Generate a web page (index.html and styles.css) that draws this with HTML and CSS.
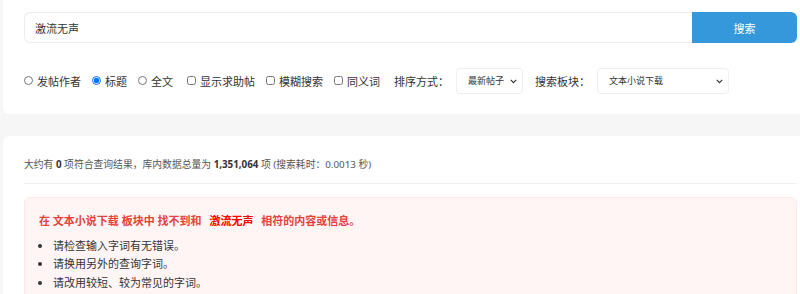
FILE: index.html
```html
<!DOCTYPE html>
<html lang="zh-CN">
<head>
<meta charset="utf-8">
<title>搜索</title>
<link rel="stylesheet" href="styles.css">
</head>
<body>
<div class="wrap">
  <section class="card search-card">
    <form class="search-bar">
      <input class="search-input" type="text" value="激流无声">
      <button class="search-btn" type="button">搜索</button>
    </form>
    <div class="options">
      <label class="opt"><input type="radio" name="scope">发帖作者</label>
      <label class="opt"><input type="radio" name="scope" checked>标题</label>
      <label class="opt opt-wide"><input type="radio" name="scope">全文</label>
      <label class="opt"><input type="checkbox">显示求助帖</label>
      <label class="opt"><input type="checkbox">模糊搜索</label>
      <label class="opt opt-wide"><input type="checkbox">同义词</label>
      <span class="sel-label">排序方式：</span>
      <div class="sel sel-sort">
        <select><option>最新帖子</option></select>
        <svg class="chev" width="7" height="5" viewBox="0 0 7 5"><path d="M0.8 0.9 L3.5 3.6 L6.2 0.9" fill="none" stroke="#333" stroke-width="1.2"/></svg>
      </div>
      <span class="sel-label">搜索板块：</span>
      <div class="sel sel-board">
        <select><option>文本小说下载</option></select>
        <svg class="chev" width="7" height="5" viewBox="0 0 7 5"><path d="M0.8 0.9 L3.5 3.6 L6.2 0.9" fill="none" stroke="#333" stroke-width="1.2"/></svg>
      </div>
    </div>
  </section>

  <section class="card result-card">
    <p class="stats">大约有 <b>0</b> 项符合查询结果，库内数据总量为 <b>1,351,064</b> 项 (搜索耗时：0.0013 秒)</p>
    <div class="alert">
      <p class="alert-title">在 文本小说下载 板块中 找不到和 <span class="kw">激流无声</span> 相符的内容或信息。</p>
      <ul class="tips">
        <li>请检查输入字词有无错误。</li>
        <li>请换用另外的查询字词。</li>
        <li>请改用较短、较为常见的字词。</li>
      </ul>
    </div>
  </section>
</div>
</body>
</html>
```

FILE: styles.css
```css
html, body {
  margin: 0;
  padding: 0;
}
body {
  background: #f6f6f6;
  overflow: hidden;
  font-family: "Noto Sans", "Noto Sans CJK SC", sans-serif;
  color: #333;
  font-size: 11px;
}
.wrap {
  width: 815px;
  margin-left: 3px;
}
.card {
  background: #fff;
  border-radius: 6px;
  padding: 0 21px;
}
.search-card {
  padding-top: 12px;
  padding-bottom: 20px;
  border-radius: 0 0 6px 6px;
}
.search-bar {
  display: flex;
  margin: 0;
  height: 31px;
}
.search-input {
  flex: 1;
  box-sizing: border-box;
  height: 31px;
  border: 1px solid #ececec;
  border-right: none;
  border-radius: 6px 0 0 6px;
  padding: 0 10px;
  font: inherit;
  font-size: 11px;
  color: #333;
  outline: none;
}
.search-btn {
  width: 105px;
  height: 31px;
  border: none;
  background: #3498db;
  color: #fff;
  border-radius: 0 6px 6px 0;
  font: inherit;
  font-size: 11px;
  padding: 0;
}
.options {
  display: flex;
  align-items: center;
  margin-top: 24px;
  height: 27px;
}
.opt {
  display: flex;
  align-items: center;
  margin-right: 11px;
  white-space: nowrap;
}
.opt-wide {
  margin-right: 14px;
}
.opt input {
  width: 9px;
  height: 9px;
  margin: 0 4px 0 0;
}
.sel-label {
  margin-right: 7px;
  white-space: nowrap;
}
.sel {
  position: relative;
  height: 26px;
  margin-right: 12px;
}
.sel select {
  appearance: none;
  -webkit-appearance: none;
  box-sizing: border-box;
  height: 26px;
  border: 1px solid #efefef;
  border-radius: 4px;
  background: #fff;
  font: inherit;
  font-size: 9px;
  color: #333;
  padding: 0 0 0 11px;
  outline: none;
}
.sel-sort select { width: 67px; }
.sel-board select { width: 132px; }
.chev {
  position: absolute;
  right: 6px;
  top: 11px;
  pointer-events: none;
}
.result-card {
  margin-top: 22px;
  padding-top: 21px;
  height: 200px;
  border-radius: 6px;
}
.stats {
  margin: 0;
  font-size: 9.8px;
  line-height: 16px;
  color: #555;
  padding-bottom: 10px;
  border-bottom: 1px solid #f1f1f1;
}
.stats b {
  color: #333;
}
.alert {
  margin-top: 13px;
  background: #fff5f5;
  border: 1px solid #fde8e8;
  border-radius: 6px;
  padding: 14px 14px 10px;
}
.alert-title {
  margin: 0 0 7px;
  font-weight: bold;
  color: #e5423b;
  line-height: 18px;
  font-size: 11px;
}
.kw {
  color: #ff0000;
  margin: 0 5px;
}
.tips {
  margin: 0;
  padding-left: 14px;
  line-height: 18.3px;
  color: #333;
}
```
